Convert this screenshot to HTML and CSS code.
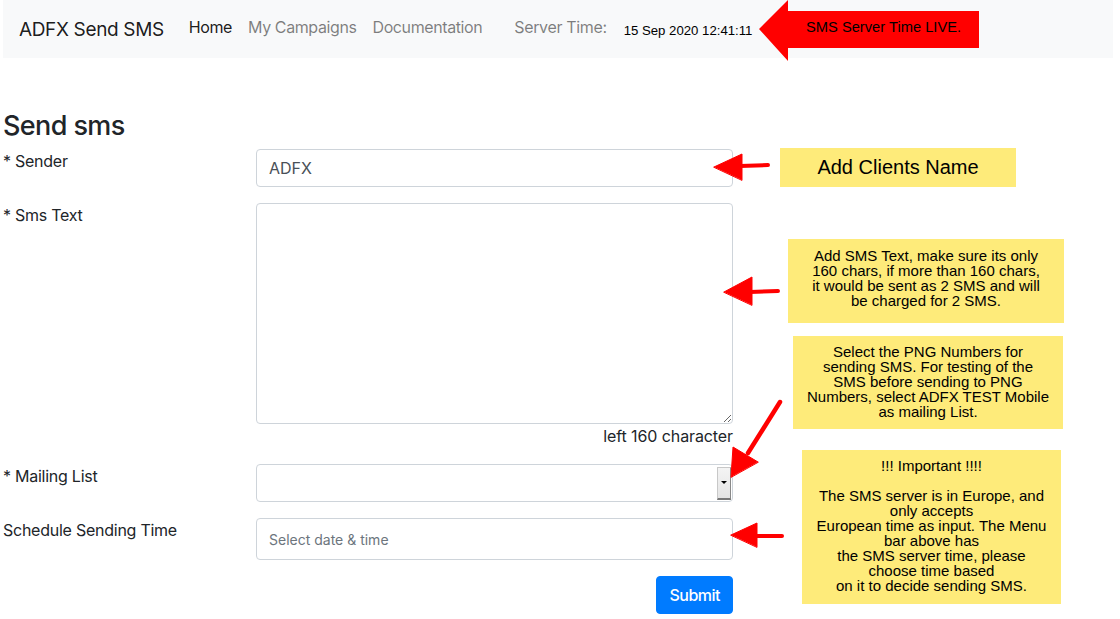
FILE: index.html
```html
<!DOCTYPE html>
<html lang="en">
<head>
<meta charset="utf-8">
<title>ADFX Send SMS</title>
<link rel="stylesheet" href="styles.css">
</head>
<body>
<div class="page">
  <nav class="navbar">
    <span class="brand">ADFX Send SMS</span>
    <ul class="nav">
      <li class="nav-link active">Home</li>
      <li class="nav-link">My Campaigns</li>
      <li class="nav-link">Documentation</li>
    </ul>
    <span class="time-label">Server Time:</span>
    <span class="time-value">15 Sep 2020 12:41:11</span>
  </nav>

  <main class="content">
    <h3 class="title">Send sms</h3>
    <form class="form">
      <div class="row">
        <label class="label">* Sender</label>
        <div class="control"><input class="input" type="text" value="ADFX"></div>
      </div>
      <div class="row row-tight">
        <label class="label">* Sms Text</label>
        <div class="control">
          <textarea class="textarea"></textarea>
          <div class="counter">left 160 character</div>
        </div>
      </div>
      <div class="row">
        <label class="label">* Mailing List</label>
        <div class="control">
          <div class="select"><span class="select-btn"><span class="caret"></span></span></div>
        </div>
      </div>
      <div class="row">
        <label class="label">Schedule Sending Time</label>
        <div class="control"><input class="input input-date" type="text" placeholder="Select date &amp; time"></div>
      </div>
      <div class="row">
        <span class="label"></span>
        <div class="control actions"><button class="btn" type="button">Submit</button></div>
      </div>
    </form>
  </main>

  <div class="note-live">
    <svg class="live-arrow" width="221" height="61" viewBox="0 0 221 61"><polygon points="0,29 29,0 29,11 220,11 220,48 29,48 29,61" fill="#ff0000"/></svg>
    <span class="live-text">SMS Server Time LIVE.</span>
  </div>

  <div class="note note-1">Add Clients Name</div>
  <div class="note note-2">Add SMS Text, make sure its only<br>160 chars, if more than 160 chars,<br>it would be sent as 2 SMS and will<br>be charged for 2 SMS.</div>
  <div class="note note-3">Select the PNG Numbers for<br>sending SMS. For testing of the<br>SMS before sending to PNG<br>Numbers, select ADFX TEST Mobile<br>as mailing List.</div>
  <div class="note note-4">!!! Important !!!!<br><br>The SMS server is in Europe, and<br>only accepts<br>European time as input. The Menu<br>bar above has<br>the SMS server time, please<br>choose time based<br>on it to decide sending SMS.</div>

  <svg class="arrows" width="1120" height="619" viewBox="0 0 1120 619">
    <g fill="#ff0000" stroke="#ff0000" stroke-linecap="round">
      <line x1="740" y1="166" x2="768" y2="165" stroke-width="4"/>
      <polygon points="714,167 742,154 742,180" stroke-width="1"/>
      <line x1="750" y1="292" x2="778" y2="291" stroke-width="4"/>
      <polygon points="724,292 752,277 752,305" stroke-width="1"/>
      <line x1="780" y1="402" x2="748" y2="453" stroke-width="4.5"/>
      <polygon points="731,477 733,447 758,462" stroke-width="1"/>
      <line x1="755" y1="536" x2="782" y2="536" stroke-width="4"/>
      <polygon points="731,535 757,523 757,547" stroke-width="1"/>
    </g>
  </svg>
</div>
</body>
</html>
```

FILE: styles.css
```css
* { box-sizing: border-box; }

html, body {
  margin: 0;
  padding: 0;
  background: #fff;
}

body {
  font-family: Inter, "Liberation Sans", Arial, sans-serif;
  font-size: 16px;
  line-height: 24px;
  color: #212529;
  letter-spacing: -0.25px;
}

.page {
  position: relative;
  width: 1120px;
  height: 619px;
  overflow: hidden;
  padding: 0 7px 0 3px;
}

.navbar {
  display: flex;
  align-items: center;
  height: 58px;
  background: #f8f9fa;
  padding: 0 16px;
}

.brand {
  font-size: 19px;
  line-height: 30px;
  color: rgba(0,0,0,.9);
  margin-right: 25px;
  letter-spacing: -0.35px;
  position: relative;
  top: 1px;
}

.nav {
  display: flex;
  list-style: none;
  margin: 0;
  padding: 0;
  gap: 16px;
  position: relative;
  top: -2px;
}

.nav-link {
  color: rgba(0,0,0,.5);
  letter-spacing: -0.4px;
}

.nav-link.active {
  color: rgba(0,0,0,.9);
}

.time-label {
  margin-left: 32px;
  color: rgba(0,0,0,.5);
  letter-spacing: -0.35px;
  position: relative;
  top: -2px;
}

.time-value {
  margin-left: 17px;
  font-family: "Liberation Sans", Arial, sans-serif;
  font-size: 13.2px;
  letter-spacing: 0;
  color: #000;
  padding-top: 3px;
}

.content {
  padding-top: 52px;
}

.title {
  margin: 0 0 7px;
  font-size: 27px;
  font-weight: 500;
  line-height: 32px;
  letter-spacing: -0.6px;
}

.form {
  width: 730px;
}

.row {
  display: flex;
  align-items: flex-start;
  margin-bottom: 16px;
}

.label {
  width: 253px;
  flex: none;
}

.control {
  width: 477px;
  flex: none;
}

.input {
  display: block;
  width: 100%;
  height: 38px;
  padding: 6px 12px;
  font: inherit;
  color: #495057;
  background: #fff;
  border: 1px solid #ced4da;
  border-radius: 4px;
  outline: none;
}

.input-date {
  height: 42px;
  font-size: 14px;
  letter-spacing: 0;
}

.input-date::placeholder {
  color: #6c757d;
}

.textarea {
  display: block;
  width: 100%;
  height: 221px;
  padding: 6px 12px;
  font: inherit;
  border: 1px solid #ced4da;
  border-radius: 4px;
  resize: vertical;
  outline: none;
}

.counter {
  text-align: right;
  line-height: 24px;
  letter-spacing: -0.1px;
}

.select {
  position: relative;
  height: 38px;
  border: 1px solid #ced4da;
  border-radius: 4px;
  background: #fff;
  display: flex;
  justify-content: flex-end;
  align-items: center;
  padding-right: 1px;
}

.select-btn {
  width: 14px;
  height: 33px;
  background: linear-gradient(#f4f4f4, #e4e4e4);
  border: 1px solid #c8c8c8;
  border-right-color: #888;
  border-bottom: 2px solid #777;
  display: flex;
  align-items: center;
  justify-content: center;
}

.caret {
  width: 0;
  height: 0;
  border-left: 3px solid transparent;
  border-right: 3px solid transparent;
  border-top: 3px solid #000;
}

.actions {
  display: flex;
  justify-content: flex-end;
}

.btn {
  height: 38px;
  padding: 0 12px;
  font: inherit;
  font-weight: 500;
  letter-spacing: -0.5px;
  color: #fff;
  background: #007bff;
  border: 1px solid #007bff;
  border-radius: 4px;
}

/* annotation overlays */
.note-live {
  position: absolute;
  left: 759px;
  top: 0;
  width: 221px;
  height: 61px;
}

.live-arrow {
  display: block;
}

.live-text {
  position: absolute;
  left: 47px;
  top: 18px;
  font-family: "Liberation Sans", Arial, sans-serif;
  font-size: 14.7px;
  letter-spacing: 0;
  line-height: 18px;
  color: #000;
  white-space: nowrap;
}

.note {
  position: absolute;
  background: #feeb7a;
  color: #000;
  font-family: "Liberation Sans", Arial, sans-serif;
  font-size: 15px;
  letter-spacing: 0;
  line-height: 15px;
  text-align: center;
}

.note-1 {
  left: 780px;
  top: 148px;
  width: 236px;
  height: 39px;
  font-size: 20px;
  line-height: 39px;
}

.note-2 {
  left: 788px;
  top: 239px;
  width: 276px;
  height: 84px;
  padding-top: 9px;
}

.note-3 {
  left: 793px;
  top: 336px;
  width: 270px;
  height: 93px;
  padding-top: 8px;
}

.note-4 {
  left: 802px;
  top: 450px;
  width: 259px;
  height: 154px;
  padding-top: 8px;
}

.arrows {
  position: absolute;
  left: 0;
  top: 0;
  pointer-events: none;
}
```
